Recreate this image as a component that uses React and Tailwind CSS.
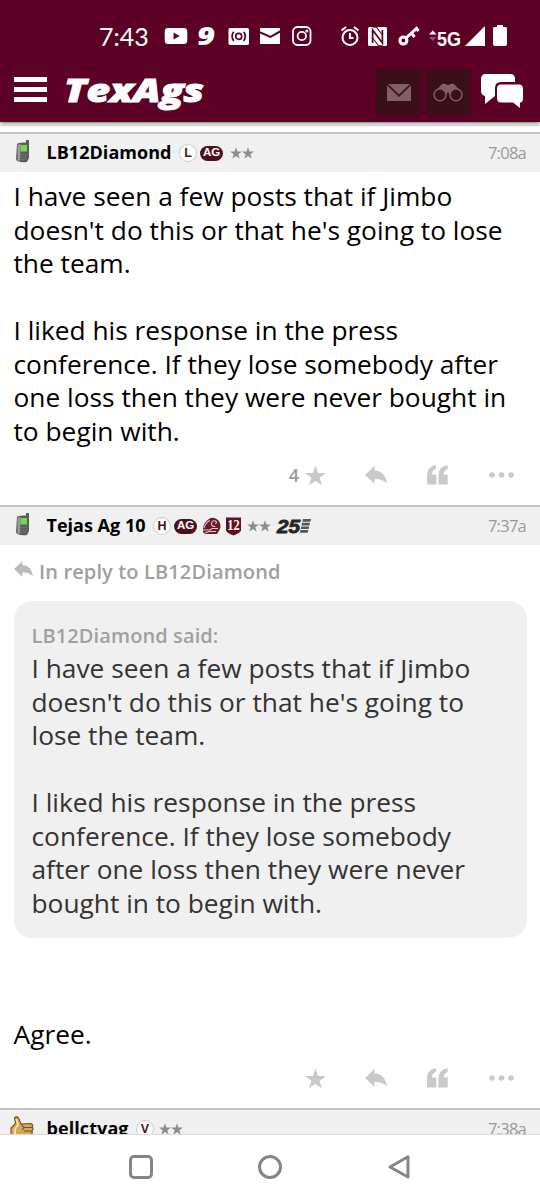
import React from "react";

const StatusBar = () => (
  <div className="flex h-[60px] items-start pl-[99px] pt-[24px]">
    <span className="-mt-[4px] w-[50px] font-['Lato'] text-[25px] leading-8 whitespace-nowrap">
      7:43
    </span>
    {/* notifications */}
    <svg className="ml-[15px] h-6 w-6" viewBox="0 0 24 24" fill="currentColor">
      <path d="M4 4H20Q23.3 4 23.3 8V16Q23.3 20 20 20H4Q.7 20 .7 16V8Q.7 4 4 4ZM9.5 8.5V15.5L15.7 12Z" fillRule="evenodd" />
    </svg>
    <svg className="ml-[9px] h-6 w-5 overflow-visible" viewBox="0 0 20 24" fill="currentColor">
      <text x="0" y="20.5" textLength="18" lengthAdjust="spacingAndGlyphs" className="font-['Open_Sans'] text-[24px] font-extrabold italic">9</text>
    </svg>
    <svg className="ml-[11px] h-6 w-[22px]" viewBox="0 0 22 24">
      <rect x=".5" y="4" width="20.5" height="17" rx="1.8" fill="#fff" />
      <g fill="none" stroke="#5c0025" strokeWidth="1.7">
        <circle cx="10.7" cy="12.4" r="3" />
        <path d="M5.7 7.8Q2.4 12.4 5.7 17M15.7 7.8Q19 12.4 15.7 17" />
      </g>
    </svg>
    <svg className="ml-[10px] h-6 w-5" viewBox="0 0 20 24" fill="currentColor">
      <path d="M0 4H20V6.3L10.5 11.7L0 7.3ZM0 9.4L10.5 14L20 8.7V20H0Z" />
    </svg>
    <svg className="ml-[12px] h-6 w-5" viewBox="0 0 20 24" fill="none" stroke="#fff" strokeWidth="1.8">
      <rect x="1" y="3" width="17.5" height="18" rx="4.5" />
      <circle cx="9.8" cy="12" r="4.2" />
      <circle cx="14.8" cy="7" r=".6" />
    </svg>
    {/* system icons */}
    <svg className="ml-[29px] h-6 w-5" viewBox="0 0 20 24" fill="none" stroke="#fff" strokeWidth="2">
      <circle cx="9" cy="13.5" r="7.5" />
      <path d="M.5 6.5L5 3M17.5 6.5L13 3M9 9V14H12.5" />
    </svg>
    <svg className="ml-[7px] h-6 w-5" viewBox="0 0 20 24">
      <rect x="0" y="3" width="19" height="19" rx="1.5" fill="#fff" />
      <path d="M4.6 19V6L14.4 19V6" stroke="#5c0025" strokeWidth="1.7" fill="none" />
      <path d="M4.2 3L8.5 3.2L14.4 11M4.6 14L10.5 21.8H14.8" stroke="#5c0025" strokeWidth="1.1" fill="none" />
    </svg>
    <svg className="ml-[10px] h-6 w-[22px]" viewBox="0 0 22 24" fill="none" stroke="#fff" strokeWidth="3">
      <circle cx="5.4" cy="16.6" r="3.5" />
      <path d="M8 14L18.5 4.5L20.5 7M13.5 9L16.5 13" />
    </svg>
    <svg className="ml-[9px] h-6 w-2" viewBox="0 0 8 24">
      <path d="M0 10.5L3.8 6.5L7.5 10.5Z" fill="#fff" />
      <path d="M0 13L3.8 17L7.5 13Z" fill="#98506b" />
    </svg>
    <svg className="h-6 w-[25px] overflow-visible" viewBox="0 0 25 24" fill="currentColor">
      <text x="0" y="22" textLength="24" lengthAdjust="spacingAndGlyphs" className="font-['Liberation_Sans'] text-[21px] font-bold">5G</text>
    </svg>
    <svg className="ml-[3px] h-6 w-5" viewBox="0 0 20 24" fill="currentColor">
      <path d="M20 2V22H0Z" />
    </svg>
    <svg className="ml-[8px] h-6 w-[14px]" viewBox="0 0 14 24" fill="currentColor">
      <path d="M4 1H10V3H12.5Q14 3 14 4.5V20Q14 22 12 22H2Q0 22 0 20V4.5Q0 3 1.5 3H4Z" />
    </svg>
  </div>
);

const NavBar = () => (
  <div className="flex h-[62px] items-start pt-[9px]">
    <div className="ml-[13.5px] mt-[8px] flex w-[33px] flex-col gap-[5.5px]">
      <div className="h-[4.5px] bg-white" />
      <div className="h-[4.5px] bg-white" />
      <div className="h-[4.5px] bg-white" />
    </div>
    <svg className="ml-[17px] h-[46px] w-[142px]" viewBox="0 0 142 46" fill="#fff">
      <text x="0" y="32.5" textLength="140" lengthAdjust="spacingAndGlyphs" stroke="#fff" strokeWidth="1" className="font-['Open_Sans'] text-[32px] font-extrabold italic">TexAgs</text>
    </svg>
    <div className="ml-[170px] flex h-[46px] w-[45px] items-center justify-center rounded-sm bg-[#3b0f1a]">
      <svg className="ml-[1px] h-[17px] w-6" viewBox="0 0 24 17" fill="#805f68">
        <path d="M1 0H23L12 10.5ZM0 1.2L12 13L24 1.2V17H0Z" />
      </svg>
    </div>
    <div className="ml-[5px] flex h-[46px] w-[45px] items-center justify-center rounded-sm bg-[#3b0f1a]">
      <svg className="h-[19px] w-[30px]" viewBox="0 0 30 19">
        <path d="M3 8L8 2Q10 0 12.5 1L14 2H16L17.5 1Q20 0 22 2L27 8L19 14L15 9L11 14Z" fill="#805f68" />
        <circle cx="7" cy="11.7" r="6" fill="#3b0f1a" stroke="#805f68" strokeWidth="1.5" />
        <circle cx="23" cy="11.7" r="6" fill="#3b0f1a" stroke="#805f68" strokeWidth="1.5" />
      </svg>
    </div>
    <svg className="ml-[9.5px] mt-[4px] h-9 w-[44px]" viewBox="0 0 44 36" fill="#fff">
      <path d="M6 1H30Q35 1 35 6V9H21Q15 9 15 15V23L5 31V23Q1 22 1 18V6Q1 1 6 1Z" />
      <path d="M21 11.5H39Q43 11.5 43 16V25Q43 29.5 40 29.5V35L33 29.5H21Q17 29.5 17 25V16Q17 11.5 21 11.5Z" />
    </svg>
  </div>
);

const PhoneIcon = () => (
  <svg className="-mt-[3px] h-[23px] w-[14px]" viewBox="0 0 14 23">
    <path d="M10 0H13V18L11 22Q6 23 1 21L0 19L1 4Q2 2 10 2.5Z" fill="#5c5c5c" />
    <path d="M1.5 5Q3 3.5 4.5 4L4 20.5Q2.5 21.5 1.5 20Z" fill="#9a9a9a" />
    <path d="M4.5 5H11V11.5H4.5Z" fill="#72d94b" />
    <path d="M4.5 14.5H10.5M4.5 17H10.5M4.5 19.5H10" stroke="#777" strokeWidth="1.2" strokeDasharray="1.6 .6" />
  </svg>
);

const ThumbIcon = () => (
  <svg className="-mt-[3px] h-[24px] w-[24px]" viewBox="0 0 24 24">
    <path d="M1 12Q4 10 5.5 7L4.5 2Q6-.3 8.5 2L11 8L21 7.5Q24 9 22 11Q24 13 22 15Q23 18 20 19Q20 22 16 22L1 20Z" fill="#d5a95b" stroke="#6f4d21" strokeWidth="1.1" />
    <path d="M14 11.5H22M14 15H22M14 18.5H20M11 8L14 11.5L12 14" stroke="#76501e" strokeWidth="1.1" fill="none" />
    <path d="M6.5 3L8 9L5 13V18" stroke="#f7dda0" strokeWidth="2" fill="none" />
  </svg>
);

const LetterBadge = ({ children }) => (
  <span className="flex size-[18px] items-center justify-center rounded-full border border-[#cdcdcd] bg-white font-['Liberation_Sans'] text-[12.5px] leading-none font-bold text-[#500f1c]">
    {children}
  </span>
);

const AgBadge = () => (
  <span className="ml-[3px] flex h-[15px] w-[23px] items-center justify-center rounded-full bg-[#500f1c] font-['Liberation_Sans'] text-[11.5px] leading-none font-bold text-white">
    AG
  </span>
);

const STAR = "M12 0L14.9 8.6H24L16.7 14L19.4 22.8L12 17.5L4.6 22.8L7.3 14L0 8.6H9.1Z";

const Stars = ({ className }) => (
  <span className={`flex ${className}`}>
    {[0, 1].map((i) => (
      <svg key={i} className="h-[12px] w-[12px]" viewBox="0 0 24 23" fill="#8c8c8c">
        <path d={STAR} />
      </svg>
    ))}
  </span>
);

const HelmetBadge = () => (
  <svg className="ml-[5px] h-[18px] w-[19px]" viewBox="0 0 19 18">
    <path d="M1 11Q2 5 7 2Q12-1 16.5 3.5Q20 8 17.5 13L15 17H3L1 15Z" fill="#6b1a2a" />
    <path d="M13.5 9.5Q9.5 10 9.5 6.5Q10 3 13.5 4Q16 6 13 6.5M2 11Q4 5 8 3.5M1 13H8L10 11.5H16M3 16L7 14.5H14" stroke="#ddc9cd" strokeWidth="1.1" fill="none" />
  </svg>
);

const TwelveBadge = () => (
  <svg className="ml-[5px] h-[19px] w-[15px]" viewBox="0 0 15 19">
    <path d="M0 .5H15V13.5Q14 16 7.5 18.5Q1 16 0 13.5Z" fill="#61101f" />
    <text x="1.2" y="13" textLength="12.5" lengthAdjust="spacingAndGlyphs" fill="#fff" className="font-['Liberation_Serif'] text-[14px] font-bold">12</text>
  </svg>
);

const TwentyFiveBadge = () => (
  <svg className="ml-[6px] h-[16px] w-[35px] overflow-visible" viewBox="0 0 35 16">
    <text x="0" y="14.6" textLength="23" lengthAdjust="spacingAndGlyphs" fill="#252525" stroke="#252525" strokeWidth=".8" className="font-['Liberation_Sans'] text-[18px] font-bold italic">25</text>
    <path d="M26 1H34L33.3 3.7H25.3ZM25.1 4.8H33L32.4 7.4H24.5ZM24.3 8.5H32.2L31.6 11H23.7ZM23.5 12H31.4L30.7 14.7H22.8Z" fill="#555" />
  </svg>
);

const PostHeader = ({ icon, name, nameWidth, time, children }) => (
  <div className="flex h-[40px] shrink-0 items-center border-t-2 border-[#c2c2c2] bg-[#f0f0f0] pr-[14px]">
    {icon}
    <svg className="h-[26px] shrink-0 overflow-visible" width={nameWidth} viewBox={`0 0 ${nameWidth} 26`}>
      <text x="-0.5" y="19" textLength={nameWidth + 1} className="font-['Open_Sans'] text-[18px] font-bold">{name}</text>
    </svg>
    <span className="ml-[8px] flex items-center">{children}</span>
    <span className="ml-auto text-[16.5px] tracking-[-0.75px] text-[#999]">{time}</span>
  </div>
);

const ReplyArrow = ({ className }) => (
  <svg className={className} viewBox="0 0 22 18" fill="currentColor">
    <path d="M0 9L9.5 0V4.5Q20 5 22 17.5Q17 12.5 9.5 13V18Z" />
  </svg>
);

const Actions = ({ likes }) => (
  <div className="-mt-px flex h-[22px] items-center pr-[26px] text-[#c9c9c9]">
    <span className="ml-[13px] w-[286px] text-right text-[18px] font-semibold text-[#999]">{likes}</span>
    <svg className="ml-[6px] h-[21px] w-[21px]" viewBox="0 0 24 23" fill="currentColor">
      <path d={STAR} />
    </svg>
    <ReplyArrow className="ml-[39px] h-[18px] w-[22px]" />
    <svg className="ml-[40px] h-[20px] w-[21px]" viewBox="0 0 21 20" fill="currentColor">
      <path d="M9 0V4Q5 5 5 9.5H9.2V19.5H0V11Q0 1.5 9 0Z" />
      <path d="M20.7 0V4Q16.7 5 16.7 9.5H20.7V19.5H11.5V11Q11.5 1.5 20.7 0Z" />
    </svg>
    <svg className="ml-[41px] h-[6px] w-[25px] shrink-0" viewBox="0 0 25 6" fill="currentColor">
      <circle cx="3" cy="3" r="2.8" />
      <circle cx="12.5" cy="3" r="2.8" />
      <circle cx="22" cy="3" r="2.8" />
    </svg>
  </div>
);

const SystemNav = () => (
  <div className="flex h-[66px] items-center border-t border-[#dcdcdc] bg-white pb-[2px] pl-[129px]">
    <div className="size-6 rounded-[5px] border-[3px] border-[#858585]" />
    <div className="ml-[105px] size-6 rounded-full border-[3px] border-[#858585]" />
    <svg className="ml-[106px] h-6 w-[22px]" viewBox="0 0 22 24" fill="none" stroke="#858585" strokeWidth="3" strokeLinejoin="round">
      <path d="M20 1.8V22L2 12Z" />
    </svg>
  </div>
);

export default function App() {
  return (
    <div className="flex h-[1200px] w-[540px] flex-col overflow-hidden bg-white font-['Open_Sans',sans-serif] text-black">
      <header className="z-10 h-[122px] shrink-0 bg-[#5c0025] text-white shadow-[0_1px_4px_rgba(0,0,0,0.6)]">
        <StatusBar />
        <NavBar />
      </header>

      <main className="flex h-[1012px] shrink-0 flex-col overflow-hidden">
        <div className="h-[4px] shrink-0 border-b border-[#dde5e3]" />
        <div className="h-[6px] shrink-0" />
        <PostHeader
          icon={<span className="ml-[16px] w-[31px]"><PhoneIcon /></span>}
          name="LB12Diamond"
          nameWidth={124}
          time="7:08a"
        >
          <LetterBadge>L</LetterBadge>
          <AgBadge />
          <Stars className="ml-[7px]" />
        </PostHeader>
        <div className="h-[293px] shrink-0 pl-[13.5px] pt-[8px] text-[26.3px] leading-[33.55px] whitespace-nowrap">
          <p>I have seen a few posts that if Jimbo<br />doesn't do this or that he's going to lose<br />the team.</p>
          <p className="mt-[33.5px]">I liked his response in the press<br />conference. If they lose somebody after<br />one loss then they were never bought in<br />to begin with.</p>
        </div>
        <div className="h-[40px] shrink-0">
          <Actions likes="4" />
        </div>

        <PostHeader
          icon={<span className="ml-[16px] w-[31px]"><PhoneIcon /></span>}
          name="Tejas Ag 10"
          nameWidth={98}
          time="7:37a"
        >
          <LetterBadge>H</LetterBadge>
          <AgBadge />
          <HelmetBadge />
          <TwelveBadge />
          <Stars className="ml-[6px]" />
          <TwentyFiveBadge />
        </PostHeader>
        <div className="flex h-[56px] shrink-0 pl-[14px] pt-[13px] text-[20px] leading-[27px] font-semibold tracking-[0.13px] text-[#a0a0a0]">
          <ReplyArrow className="mt-[3px] mr-[6px] h-[16px] w-[19px] text-[#bbb]" />
          In reply to LB12Diamond
        </div>
        <div className="mx-[13.5px] h-[337px] shrink-0 rounded-[18px] bg-[#f0f0f0] pl-[18px] pt-[21px] whitespace-nowrap">
          <div className="text-[20px] leading-[28px] font-semibold tracking-[0.1px] text-[#a0a0a0]">LB12Diamond said:</div>
          <div className="mt-[2px] text-[26.3px] leading-[33.6px] text-[#333]">
            <p>I have seen a few posts that if Jimbo<br />doesn't do this or that he's going to<br />lose the team.</p>
            <p className="mt-[33.5px]">I liked his response in the press<br />conference. If they lose somebody<br />after one loss then they were never<br />bought in to begin with.</p>
          </div>
        </div>
        <p className="mt-[80px] h-[50px] shrink-0 pl-[13.5px] text-[26.3px] leading-[33.55px]">Agree.</p>
        <div className="h-[40px] shrink-0">
          <Actions />
        </div>

        <PostHeader
          icon={<span className="ml-[10px] w-[37px]"><ThumbIcon /></span>}
          name="bellctvag"
          nameWidth={81}
          time="7:38a"
        >
          <LetterBadge>V</LetterBadge>
          <Stars className="ml-[5px]" />
        </PostHeader>
      </main>
      <SystemNav />
    </div>
  );
}
